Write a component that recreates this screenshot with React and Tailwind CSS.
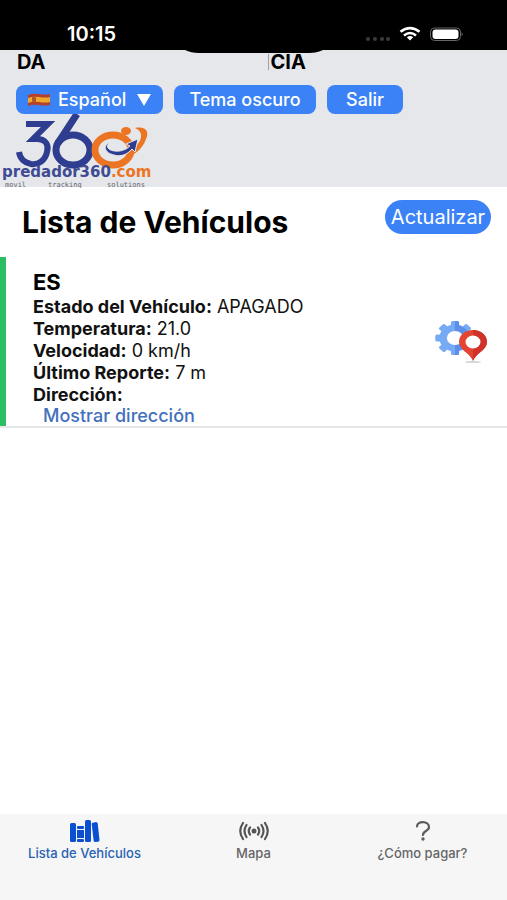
import React, { useState } from 'react';

const details = [
  { label: 'Estado del Vehículo', value: 'APAGADO' },
  { label: 'Temperatura', value: '21.0' },
  { label: 'Velocidad', value: '0 km/h' },
  { label: 'Último Reporte', value: '7 m' },
  { label: 'Dirección', value: '' },
];

function StatusBar() {
  return (
    <div className="relative h-[50px] shrink-0 bg-black text-white">
      <div className="flex h-full items-center justify-between pl-[67px] pr-[44px] pt-[18px]">
        <span className="text-xl font-semibold">10:15</span>
        <svg width="98" height="16" viewBox="0 0 98 16" aria-hidden="true">
          <g fill="#3c3c3c">
            <circle cx="3" cy="13" r="2" />
            <circle cx="10" cy="13" r="2" />
            <circle cx="17" cy="13" r="2" />
            <circle cx="23" cy="13" r="2" />
          </g>
          <g fill="none" stroke="#fff" strokeWidth="2.6">
            <path d="M35.500 5.800Q45 -1.600 54.500 5.800" />
            <path d="M39 9.400Q45 4.600 51 9.400" />
          </g>
          <path d="M41.800 11.200Q45 9 48.200 11.200L45 14.600Z" fill="#fff" />
          <rect x="65.500" y="2" width="30" height="12.500" rx="4" fill="none" stroke="#666" />
          <rect x="67.500" y="3.500" width="26" height="9.500" rx="3" fill="#fff" />
          <path d="M96.700 6.500Q98.500 8.200 96.700 10Z" fill="#777" />
        </svg>
      </div>
      <svg className="absolute left-1/2 top-full -translate-x-1/2" width="138" height="3" viewBox="0 0 138 3" aria-hidden="true">
        <path d="M0 0Q6 3 14 3H124Q132 3 138 0Z" fill="#000" />
      </svg>
    </div>
  );
}

function SpainFlag() {
  return (
    <svg className="shrink-0" width="22" height="14" viewBox="0 0 22 14" aria-hidden="true">
      <path d="M0 2Q5 0 11 1T22 1V12Q17 13 11 12T0 13Z" fill="#b5402c" />
      <path d="M0 5Q5 3 11 4T22 4V9Q17 10 11 9T0 10Z" fill="#f0a92c" />
      <rect x="4" y="4" width="4" height="5" rx="1" fill="#b4552a" />
    </svg>
  );
}

function Logo() {
  return (
    <svg width="156" height="74" viewBox="0 0 156 74" role="img" aria-label="predador360.com movil tracking solutions">
      <g fill="none" stroke="#2e3d8f">
        <path d="M26 10H48L33 25H37C46 25 49 31 47 38C45 47 38 51 31 50C25 49 20 45 19 38" strokeWidth="6" />
        <path d="M77 0L58 29" strokeWidth="7" />
        <ellipse cx="73" cy="36" rx="17" ry="15" strokeWidth="7" />
      </g>
      <ellipse cx="113" cy="36" rx="18" ry="15" fill="none" stroke="#ec7524" strokeWidth="7" />
      <ellipse cx="126" cy="17" rx="5" ry="4" fill="#ec7524" />
      <path d="M135 14C145 12 150 17 146 25C143 34 136 39 132 41L129 37C137 32 141 27 141 22C141 18 139 16 135 14Z" fill="#ec7524" />
      <path d="M110 28C104 33 109 38 120 37C125 36 128 34 130 32L126 30L138 25L135 38L132 35C127 41 120 43 114 41C105 39 102 32 110 28Z" fill="#2e3d8f" stroke="#e5e7eb" strokeWidth="1" />
      <text x="2" y="63" fontSize="15" fontWeight="bold" fontFamily="DejaVu Sans, sans-serif" fill="#3f4b92">
        predador360<tspan fill="#ec7524">.com</tspan>
      </text>
      <g fontSize="7" fontFamily="DejaVu Sans Mono, monospace" fill="#62636d">
        <text x="5" y="73">movil</text>
        <text x="48" y="73">tracking</text>
        <text x="107" y="73">solutions</text>
      </g>
    </svg>
  );
}

function Header() {
  const [language, setLanguage] = useState('es');

  return (
    <header className="h-[137px] shrink-0 bg-[#e5e7eb]">
      <div className="flex px-4 text-xl font-bold leading-6">
        <span className="w-1/2 pl-px">DA</span>
        <span className="my-1 ml-[14px] border-l border-gray-400 pl-0.5 leading-4">CIA</span>
      </div>
      <div className="mt-[11px] flex gap-[11px] px-4 text-lg font-medium leading-6 text-white">
        <label className="relative flex h-[29px] w-[147px] items-center rounded-lg bg-[#3b82f6] pl-3">
          <SpainFlag />
          <select
            aria-label="Idioma"
            value={language}
            onChange={(e) => setLanguage(e.target.value)}
            className="w-full appearance-none bg-transparent pl-2 outline-none"
          >
            <option value="es">Español</option>
          </select>
          <svg className="pointer-events-none absolute right-3" width="14" height="12" viewBox="0 0 14 12" aria-hidden="true">
            <path d="M0 0H14L7 12Z" fill="#fff" />
          </svg>
        </label>
        <button className="h-[29px] w-[142px] rounded-lg bg-[#3b82f6]">Tema oscuro</button>
        <button className="h-[29px] w-[76px] rounded-lg bg-[#3b82f6]">Salir</button>
      </div>
      <Logo />
    </header>
  );
}

const gearTeeth = [0, 45, 90, 135, 180, 225, 270, 315];

function VehicleIcon() {
  return (
    <svg width="54" height="44" viewBox="0 0 54 44" aria-hidden="true">
      <g transform="translate(20 18) scale(1.16 1)" fill="#76aaf4">
        <circle r="13.500" />
        {gearTeeth.map((angle) => (
          <rect key={angle} x="-3.500" y="-17" width="7" height="7" rx="1.500" transform={`rotate(${angle})`} />
        ))}
        <path d="M0 -17H2Q3.500 -17 3.500 -15V-12.500L8 -10L11 -7L13 0L9 10L3.500 12.500V15Q3.500 17 2 17H0Z" fill="#5c8fe8" />
        <ellipse rx="7" ry="7" fill="#fff" />
      </g>
      <ellipse cx="38" cy="42" rx="8" ry="1" fill="#d3d4da" />
      <path d="M38 41C35 33 24 30 24 22C24 15 30 10 38 10S52 15 52 22C52 30 41 33 38 41Z" fill="#e34532" />
      <path d="M38 10C46 10 52 15 52 22C52 30 41 33 38 41Z" fill="#ce3229" />
      <ellipse cx="38" cy="22" rx="7.500" ry="6.500" fill="#fff" />
    </svg>
  );
}

function VehicleCard() {
  return (
    <article className="mt-[17px] border-b-2 border-[#e5e7eb]">
      <div className="flex items-center justify-between border-l-6 border-[#2dbe64] pl-[27px] pr-[18px]">
        <div className="pt-[11px]">
          <h2 className="text-[22px] font-bold leading-7">ES</h2>
          <div className="text-lg leading-[22px] text-[#111]">
            {details.map((d) => (
              <p key={d.label}>
                <strong>{d.label}:</strong> {d.value}
              </p>
            ))}
            <a href="#direccion" className="ml-[10px] block font-medium leading-5 text-[#4270bd]">Mostrar dirección</a>
          </div>
        </div>
        <button aria-label="Opciones del vehículo">
          <VehicleIcon />
        </button>
      </div>
    </article>
  );
}

function BooksIcon() {
  return (
    <svg width="30" height="24" viewBox="0 0 30 24" fill="#0b50d0" aria-hidden="true">
      <rect x="0" y="4" width="6" height="19" rx="1.500" />
      <rect x="7" y="7" width="7" height="3" rx="1" />
      <rect x="7" y="11" width="7" height="8" />
      <rect x="7" y="20" width="7" height="3" rx="1" />
      <rect x="15" y="1" width="6" height="22" rx="1.500" />
      <path d="M22 4L26 3Q27.500 3 27.700 4.500L29.500 21Q29.500 22.500 28 22.700L25 23Q23.800 23 23.600 21.500L21.700 5Z" />
    </svg>
  );
}

function SignalIcon() {
  return (
    <svg width="32" height="24" viewBox="0 0 32 24" fill="none" stroke="#555" strokeWidth="2.200" strokeLinecap="round" aria-hidden="true">
      <circle cx="16" cy="12" r="2.500" fill="#555" stroke="none" />
      <path d="M12 8.500Q9.500 12 12 15.500M8.500 6Q4.500 12 8.500 18M5 4Q-.5 12 5 20" />
      <path d="M20 8.500Q22.500 12 20 15.500M23.500 6Q27.500 12 23.500 18M27 4Q32.500 12 27 20" />
    </svg>
  );
}

function QuestionIcon() {
  return (
    <svg width="16" height="24" viewBox="0 0 16 24" fill="none" stroke="#5c5c5c" strokeWidth="2.200" strokeLinecap="round" aria-hidden="true">
      <path d="M2 7.500C2 1.500 14 1.500 14 8C14 12.500 8 11.500 8 16" />
      <circle cx="8" cy="20" r="1.700" fill="#5c5c5c" stroke="none" />
    </svg>
  );
}

const tabs = [
  { id: 'lista', label: 'Lista de Vehículos', Icon: BooksIcon },
  { id: 'mapa', label: 'Mapa', Icon: SignalIcon },
  { id: 'pagar', label: '¿Cómo pagar?', Icon: QuestionIcon },
];

function TabBar() {
  const [active, setActive] = useState('lista');

  return (
    <nav className="grid h-[86px] shrink-0 grid-cols-3 items-start bg-[#f6f6f6] pt-[5px]">
      {tabs.map(({ id, label, Icon }) => (
        <button
          key={id}
          onClick={() => setActive(id)}
          className={`flex flex-col items-center gap-[2px] text-[13px] font-medium leading-4 ${active === id ? 'text-[#2863b4]' : 'text-[#666]'}`}
        >
          <Icon />
          {label}
        </button>
      ))}
    </nav>
  );
}

export default function App() {
  return (
    <div className="flex min-h-screen flex-col bg-white font-[Inter,sans-serif] text-black">
      <StatusBar />
      <Header />
      <main className="flex-1">
        <div className="flex items-start justify-between pl-[22px] pr-4 pt-[13px]">
          <h1 className="pt-1 text-3xl font-bold leading-[36px]">Lista de Vehículos</h1>
          <button className="h-[34px] w-[106px] rounded-full bg-[#3b82f6] text-xl text-white">Actualizar</button>
        </div>
        <VehicleCard />
      </main>
      <TabBar />
    </div>
  );
}
